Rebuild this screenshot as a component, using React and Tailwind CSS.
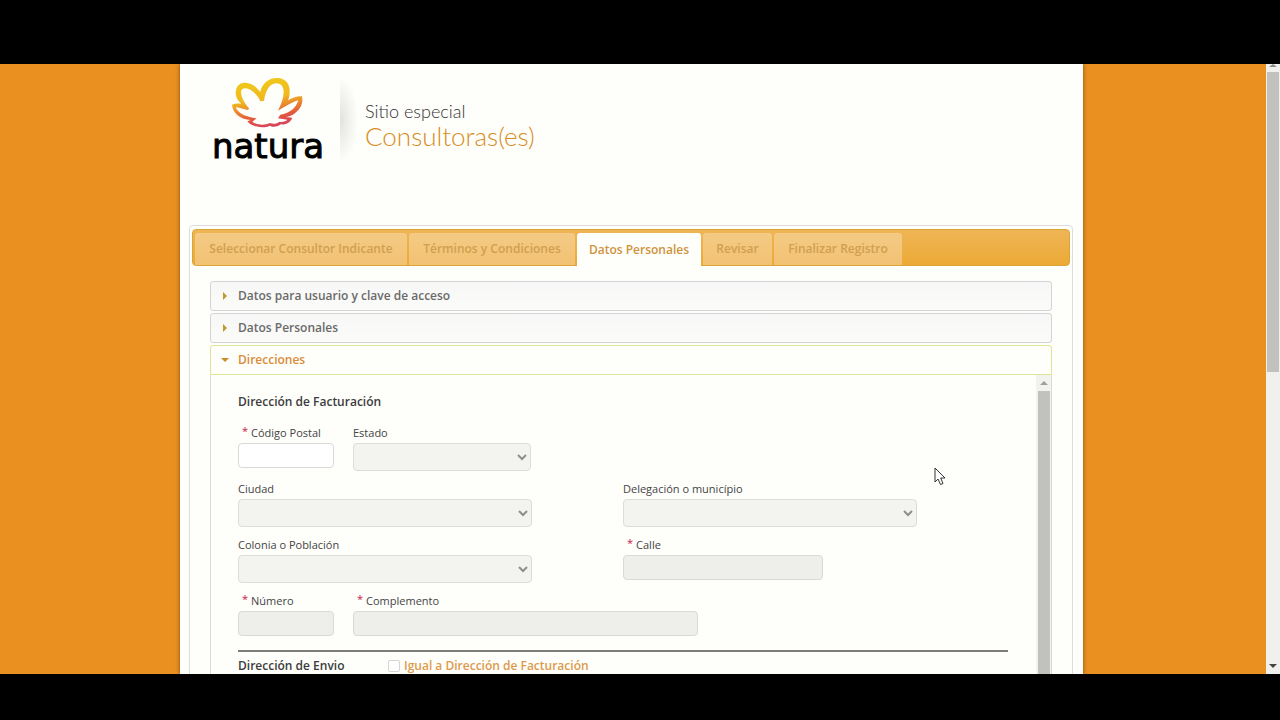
import { useState } from "react";

const tabs = [
  { name: "Seleccionar Consultor Indicante", width: "w-[212px]" },
  { name: "Términos y Condiciones", width: "w-[166px]" },
  { name: "Datos Personales", width: "w-[124px]" },
  { name: "Revisar", width: "w-[69px]" },
  { name: "Finalizar Registro", width: "w-[128px]" },
];

const sections = ["Datos para usuario y clave de acceso", "Datos Personales"];

const Flower = () => (
  <svg viewBox="0 0 240 174" className="h-[58px] w-20" aria-hidden="true">
    <defs>
      <linearGradient id="petal" x1="105" y1="14" x2="130" y2="160" gradientUnits="userSpaceOnUse">
        <stop offset="0" stopColor="#efc91a" />
        <stop offset="0.4" stopColor="#f0b81f" />
        <stop offset="0.6" stopColor="#ea8430" />
        <stop offset="0.8" stopColor="#e0553f" />
        <stop offset="1" stopColor="#d9415f" />
      </linearGradient>
    </defs>
    <path
      fill="url(#petal)"
      fillRule="evenodd"
      d="M12 92 C22 88 32 88 40 90 C28 78 20 64 24 50 C27 25 54 20 76 34 C85 41 92 48 97 54 C101 30 122 11 148 12 C175 13 186 32 185 54 C185 64 183 72 180 79 C192 72 207 66 222 67 C227 90 215 108 199 119 C191 125 181 128 172 129 L193 131 C188 145 173 153 159 151 C149 159 135 161 126 155 C114 161 98 161 85 157 C73 156 64 149 58 142 L68 138 C38 136 14 118 12 92 Z
      M23 100 C30 116 50 129 86 133 L73 143 C79 148 86 150 92 151 C104 153 114 152 126 147 C136 151 146 150 154 143 C164 145 173 142 178 137 L150 133 L157 122 C184 118 204 103 211 79 C192 84 172 98 150 110 C160 90 167 72 167 54 C167 37 159 28 144 28 C126 29 113 48 108 80 L97 82 C90 66 77 52 64 46 C52 40 40 42 39 54 C39 70 50 88 64 104 L58 108 C44 104 32 101 23 100 Z"
    />
  </svg>
);

const Label = ({ id, text, required }) => (
  <label htmlFor={id} className="flex h-4 text-[11px] leading-4 whitespace-nowrap text-[#444]">
    {required && <span className="-mt-0.5 mr-[3px] ml-1 text-[#c8174a]">*</span>}
    {text}
  </label>
);

const TextField = ({ id, text, required, width, disabled = true }) => (
  <div className={width}>
    <Label id={id} text={text} required={required} />
    <input
      id={id}
      type="text"
      disabled={disabled}
      className="mt-0.5 block h-[25px] w-full rounded-[4px] border border-[#d9dad6] bg-white px-2 text-xs disabled:bg-[#eeeeea]"
    />
  </div>
);

const SelectField = ({ id, text, width }) => (
  <div className={width}>
    <Label id={id} text={text} />
    <div className="relative mt-0.5">
      <select
        id={id}
        disabled
        className="block h-7 w-full appearance-none rounded-[4px] border border-[#dcddd9] bg-[#f3f3f0] px-2 text-xs"
      />
      <svg viewBox="0 0 10 7" className="pointer-events-none absolute top-[11px] right-1 h-[7px] w-[10px]">
        <path d="M1 1 L5 5 L9 1" fill="none" stroke="#8e8e8c" strokeWidth="2" />
      </svg>
    </div>
  </div>
);

const DireccionForm = () => {
  const [same, setSame] = useState(false);

  return (
    <form className="min-w-0 flex-1 pt-[18px] pr-7 pl-[27px]">
      <h3 className="mb-[14px] text-[12px] leading-[18px] font-semibold text-[#3c3c3c]">Dirección de Facturación</h3>
      <div className="flex flex-col gap-[10px]">
        <div className="flex h-[46px] gap-[19px]">
          <TextField id="cp" text="Código Postal" required width="w-24" disabled={false} />
          <SelectField id="estado" text="Estado" width="w-[178px]" />
        </div>
        <div className="grid h-[46px] grid-cols-2">
          <SelectField id="ciudad" text="Ciudad" width="w-[294px]" />
          <SelectField id="delegacion" text="Delegación o município" width="w-[294px]" />
        </div>
        <div className="grid h-[46px] grid-cols-2">
          <SelectField id="colonia" text="Colonia o Población" width="w-[294px]" />
          <TextField id="calle" text="Calle" required width="w-[200px]" />
        </div>
        <div className="flex gap-[19px]">
          <TextField id="numero" text="Número" required width="w-24" />
          <TextField id="complemento" text="Complemento" required width="w-[345px]" />
        </div>
      </div>
      <hr className="mt-[14px] mb-1.5 border-t-2 border-[#7d7d7d]" />
      <div className="flex items-center pb-6 text-[12px] leading-4 font-semibold">
        <h3 className="w-[150px] text-[#3c3c3c]">Dirección de Envio</h3>
        <input
          id="igual"
          type="checkbox"
          checked={same}
          onChange={(e) => setSame(e.target.checked)}
          className="mr-1 h-3 w-3 appearance-none rounded-[2px] border border-[#d5d5d2] bg-white checked:bg-[#e2933a]"
        />
        <label htmlFor="igual" className="text-[#dc9a4c]">Igual a Dirección de Facturación</label>
      </div>
    </form>
  );
};

const App = () => {
  const [active, setActive] = useState("Datos Personales");

  return (
    <div className="relative flex h-screen flex-col overflow-hidden bg-black pt-16 pb-[46px] font-['Open_Sans',sans-serif]">
      <div className="flex min-h-0 flex-1 overflow-hidden">
        <main className="flex min-w-0 flex-1 justify-center bg-[#e99020] pr-[3px]">
          <div className="w-full max-w-[903px] bg-[#fefefb] pr-2.5 pl-[9px] shadow-[0_0_4px_#7a4a10]">
            <header className="flex h-[161px] pt-2.5 pl-6">
              <div className="flex w-[110px] flex-col items-center">
                <Flower />
                <span className="font-['DejaVu_Sans',sans-serif] text-[34px] leading-7 text-black [-webkit-text-stroke:1px_black]">
                  natura
                </span>
              </div>
              <div className="mt-1.5 ml-[17px] h-20 w-[25px] bg-[radial-gradient(18px_44px_at_left,#e2e2df,transparent)]" />
              <div className="pt-[25px] font-['Lato',sans-serif] font-light">
                <p className="text-lg leading-6 text-[#333]">Sitio especial</p>
                <h1 className="text-[26px] leading-[26px] text-[#d98c22]">Consultoras(es)</h1>
              </div>
            </header>

            <div className="rounded-t-[4px] border border-[#dddddf] px-0.5 pt-[3px]">
              <nav className="flex h-[37px] gap-0.5 rounded-[4px] border border-[#dba436] bg-linear-to-b from-[#efb555] to-[#ecaa35] pt-[3px] pl-0.5 text-[12px] font-semibold">
                {tabs.map((tab) => (
                  <button
                    key={tab.name}
                    type="button"
                    onClick={() => setActive(tab.name)}
                    className={
                      tab.width +
                      " shrink-0 rounded-t-[3px] whitespace-nowrap " +
                      (tab.name == active
                        ? "h-[33px] bg-[#fefefb] text-[#cf933c]"
                        : "h-8 bg-linear-to-b from-[#f4ca84] to-[#f2c273] text-[#d0a050]")
                    }
                  >
                    {tab.name}
                  </button>
                ))}
              </nav>

              <div className="flex flex-col gap-0.5 pt-[15px] pr-[18px] pl-[18px]">
                {sections.map((name) => (
                  <button
                    key={name}
                    type="button"
                    className="flex h-[30px] items-center rounded-[3px] border border-[#d3d4d4] bg-linear-to-b from-[#f7f7f7] to-[#fbfbf9] pl-3 text-[12px] font-semibold text-[#6a6a6a]"
                  >
                    <svg viewBox="0 0 4 8" className="mr-[11px] h-2 w-1">
                      <path d="M0 0 L4 4 L0 8 Z" fill="#b99b2c" />
                    </svg>
                    {name}
                  </button>
                ))}
                <div>
                  <button
                    type="button"
                    className="flex h-[30px] w-full items-center rounded-t-[3px] border border-[#dfe597] bg-[#fefefb] pl-[10px] text-[12px] font-semibold text-[#d98c3a]"
                  >
                    <svg viewBox="0 0 8 4" className="mr-[9px] h-1 w-2">
                      <path d="M0 0 L8 0 L4 4 Z" fill="#cc8a2c" />
                    </svg>
                    Direcciones
                  </button>
                  <div className="flex border-x border-[#d9d9d9]">
                    <DireccionForm />
                    <div className="flex w-[15px] shrink-0 flex-col items-center bg-[#f2f2ee]">
                      <svg viewBox="0 0 8 4" className="mt-1.5 mb-1.5 h-1 w-2 shrink-0">
                        <path d="M0 4 L4 0 L8 4 Z" fill="#9f9f9f" />
                      </svg>
                      <div className="w-3 flex-1 bg-[#c1c2bd]" />
                    </div>
                  </div>
                </div>
              </div>
            </div>
          </div>
        </main>

        <div className="flex w-[14px] shrink-0 flex-col items-center bg-[#f0f0ed]">
          <svg viewBox="0 0 8 4" className="mb-1 h-1 w-2 shrink-0">
            <path d="M0 3 L4 0 L8 3 Z" fill="#8a8a8a" />
          </svg>
          <div className="h-[300px] w-3 bg-[#c1c2bd]" />
          <svg viewBox="0 0 8 4" className="mt-auto mb-1.5 h-1 w-2 shrink-0">
            <path d="M0 0 L8 0 L4 4 Z" fill="#444" />
          </svg>
        </div>
      </div>

      {/* mouse pointer */}
      <svg viewBox="0 0 12 19" className="pointer-events-none absolute top-[467px] left-[934px] h-[19px] w-3">
        <path
          d="M1 1 L1 15 L4 12 L6.500 17.500 L9 16.500 L6.700 11 L11 11 Z"
          fill="#fff"
          stroke="#333"
          strokeWidth="1"
        />
      </svg>
    </div>
  );
};

export default App;
